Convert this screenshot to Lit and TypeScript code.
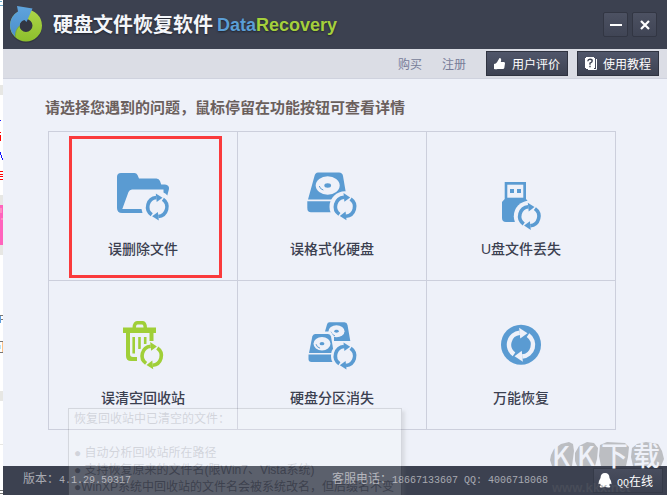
import { LitElement, html, svg, css } from "lit";
import { customElement } from "lit/decorators.js";
import { classMap } from "lit/directives/class-map.js";

const PAPER = "#eef1f9";

const syncHalf = () => svg`
  <path d="M-1 -9.5A9.5 9.5 0 0 0 -5.6 7.7" fill="none" stroke="currentColor" stroke-width="3.600"/>
  <path d="M-1.5 -13.6L5.2 -9.2L-0.6 -4.9Z" fill="currentColor"/>`;

// Pair of circling arrows, centred on the given point.
const sync = (x: number, y: number, scale = 1) => svg`
  <g transform="translate(${x} ${y}) scale(${scale})">
    ${syncHalf()}
    <g transform="rotate(180)">${syncHalf()}</g>
  </g>`;

const platter = (x: number, y: number, rx: number, ry: number) => svg`
  <ellipse cx=${x} cy=${y} rx=${rx} ry=${ry} fill=${PAPER}/>
  <ellipse cx=${x} cy=${y} rx=${rx * 0.28} ry=${ry * 0.24} fill="currentColor"/>
  <path d="M${x - rx * 0.7} ${y + 0.5}q.6 3 4 4" fill="none" stroke="currentColor" stroke-width="1"/>`;

const icons = {
  folder: svg`
    <path fill="currentColor" d="M6 5H19.500Q21.500 5 22.500 7L24 10.500H41.500Q44 10.500 45 13L46.200 16.500H50Q54.500 17 54 21L52.300 27.500Q51 25.500 48.500 24.500V21.500H17Q14.500 21.500 13.500 24L7.300 41H26.500L27.500 45H7Q2 45 2 40V9Q2 5 6 5Z"/>
    ${sync(42.3, 39)}`,
  disk: svg`
    <path fill="currentColor" d="M14 4.500H35Q38.500 4.500 39 8L43 31.500H4L10.500 8Q11.300 4.500 14 4.500Z"/>
    <path fill="currentColor" d="M3.300 33.300H43V44.300H7Q3.300 44.300 3.300 40Z"/>
    ${platter(23.7, 17.5, 12, 9.2)}
    <circle cx="41" cy="38.700" r="15.500" fill=${PAPER}/>
    ${sync(41, 38.7)}`,
  usb: svg`
    <path fill="currentColor" d="M11.700 14H33V31L35.500 34V54H13Q9 54 9 50V34L11.700 31Z"/>
    <path fill=${PAPER} d="M14.300 16.700H30.300V29.700H14.300Z"/>
    <path fill="currentColor" d="M17 21h4v4h-4zM24 21h4v4h-4z"/>
    <circle cx="36.300" cy="48.300" r="15.500" fill=${PAPER}/>
    ${sync(36.3, 48.3)}`,
  trash: svg`
    <path fill="currentColor" d="M8 10.500H17.500Q18 4 22 4H28Q31.500 4 32 10.500H41V16H38.500V24H34.500V16H15V37Q15 40 18 40H22V44H16Q11 44 11 39V16H8ZM21 10.500H28.500Q28.500 7.500 27 7.500H22.500Q21 7.500 21 10.500Z"/>
    <path fill="none" stroke="currentColor" stroke-width="2.600" d="M18.700 20V36.500M24.500 20V32M30.200 20V27"/>
    <circle cx="36.700" cy="38.700" r="13" fill=${PAPER}/>
    ${sync(36.7, 38.7)}`,
  partitions: svg`
    <path fill="currentColor" d="M25.500 5.300H40.500Q43 5.300 43.500 8L46.300 24H30L27.500 14.500H21L23 7.500Q23.500 5.300 25.500 5.300Z"/>
    ${platter(32.5, 14.3, 8, 6)}
    <path fill=${PAPER} d="M8 15H27L30 20V28H8Z"/>
    <path fill="currentColor" d="M11 17H24Q26.500 17 27 19.500L29.800 36H5L8.300 19.500Q9 17 11 17Z"/>
    <path fill="currentColor" d="M4.500 37.500H30V45H7.500Q4.500 45 4.500 42Z"/>
    ${platter(18, 26.7, 8.5, 6.7)}
    <circle cx="41" cy="39" r="14" fill=${PAPER}/>
    ${sync(41, 39)}`,
  round: svg`
    <circle cx="28" cy="27.700" r="20" fill="currentColor"/>
    <g color=${PAPER}>${sync(28, 27.7, 1.25)}</g>`,
};

type IconName = keyof typeof icons;

interface Tile {
  icon: IconName;
  label: string;
  green?: boolean;
  marked?: boolean;
  tip?: string[];
}

const tiles: Tile[] = [
  { icon: "folder", label: "误删除文件", marked: true },
  { icon: "disk", label: "误格式化硬盘" },
  { icon: "usb", label: "U盘文件丢失" },
  {
    icon: "trash",
    label: "误清空回收站",
    green: true,
    tip: [
      "恢复回收站中已清空的文件：",
      "",
      "● 自动分析回收站所在路径",
      "● 支持恢复原来的文件名(限Win7、Vista系统)",
      "●WinXP系统中回收站的文件名会被系统改名，但后缀名不变",
    ],
  },
  { icon: "partitions", label: "硬盘分区消失" },
  { icon: "round", label: "万能恢复" },
];

@customElement("app-root")
export class AppRoot extends LitElement {
  static styles = css`
    :host {
      display: block;
      font-family: "Liberation Sans", "Noto Sans CJK SC", sans-serif;
      font-size: 12px;
      color: #3b4050;
    }
    * { box-sizing: border-box; }
    button {
      font: inherit;
      color: inherit;
      margin: 0;
      padding: 0;
      border: 0;
      background: none;
      cursor: pointer;
    }
    a { text-decoration: none; color: inherit; }
    svg { display: block; flex: none; }

    .desk { display: flex; min-height: 100vh; overflow: hidden; position: relative; background: #fff; }
    .edge { flex: none; width: 3px; }
    .window { flex: 1; min-width: 0; display: flex; flex-direction: column; background: #eef1f9; }

    .title { height: 49px; display: flex; align-items: center; padding: 0 10px 0 6px; background: #3c4150; }
    .name {
      margin: 0 0 0 6px;
      display: flex;
      align-items: center;
      gap: 4px;
      font-size: 20px;
      line-height: 28px;
      font-weight: 700;
      color: #f4f6fa;
      text-shadow: 0 1px 2px #20232c;
      white-space: nowrap;
    }
    .latin { display: flex; font-size: 18px; }
    .data { color: #5b9ed6; }
    .recovery { color: #a5d03c; }
    .controls { margin-left: auto; display: flex; gap: 4px; }
    .control {
      width: 25px;
      height: 25px;
      display: grid;
      place-items: center;
      border: 1px solid #323643;
      border-radius: 2px;
      background: linear-gradient(#4c5162, #404555);
    }

    .bar {
      height: 30px;
      display: flex;
      align-items: center;
      justify-content: flex-end;
      padding: 0 8px;
      background: #dbdde5;
      border-bottom: 1px solid #cfd2de;
    }
    .link { color: #777c98; margin-right: 20px; }
    .pill {
      height: 25px;
      display: flex;
      align-items: center;
      gap: 6px;
      padding: 0 7px;
      border: 1px solid #2f3340;
      background: linear-gradient(#50566a, #3d4252);
      color: #fff;
      white-space: nowrap;
    }
    .pill + .pill { margin-left: 9px; }

    .main { flex: 1; padding: 17px 51px 36px 45px; }
    .ask { margin: 0 0 0 -3px; font-size: 15px; line-height: 24px; font-weight: 700; color: #6b605d; }
    .grid {
      list-style: none;
      margin: 11px 0 0;
      padding: 0;
      display: grid;
      grid-template-columns: repeat(3, 1fr);
      border: 1px solid #cccfdc;
      border-width: 1px 0 0 1px;
    }
    .cell { position: relative; border: 1px solid #cccfdc; border-width: 0 1px 1px 0; }
    .tile {
      width: 100%;
      height: 148px;
      display: flex;
      flex-direction: column;
      align-items: center;
      gap: 15px;
      padding-top: 36px;
      font-size: 14px;
      line-height: 20px;
      font-weight: 500;
    }
    .icon { width: 56px; height: 56px; overflow: visible; color: #5a9bd2; }
    .green .icon { color: #a0cf38; }
    .marked::after {
      content: "";
      position: absolute;
      inset: 4px 15px 2px 20px;
      border: 3px solid #fa3a3c;
      pointer-events: none;
    }
    .tip {
      position: absolute;
      z-index: 2;
      top: 127px;
      left: 19px;
      width: 334px;
      height: 140px;
      padding: 2px 5px;
      border: 1px solid #555;
      background: #fff;
      box-shadow: 3px 3px 3px #777;
      color: #444;
      line-height: 17px;
      opacity: 0.16;
      white-space: nowrap;
      pointer-events: none;
    }
    .line { margin: 0; min-height: 17px; }

    .foot {
      height: 29px;
      display: flex;
      align-items: center;
      padding: 0 4px 0 20px;
      background: #3c4150;
      color: #a8aab2;
      white-space: nowrap;
    }
    .foot p { margin: 0; line-height: 16px; padding-bottom: 2px; }
    .num { font-family: "Liberation Mono", monospace; font-size: 10px; }
    .foot .phone { margin: 0 45px 0 auto; }
    .qq {
      width: 70px;
      height: 25px;
      display: flex;
      align-items: center;
      gap: 5px;
      padding: 0 4px;
      border: 1px solid #353a48;
      background: linear-gradient(#484d5e, #3c4150);
      color: #fff;
    }

    .mark { position: absolute; right: 2px; bottom: 0; width: 116px; height: 54px; pointer-events: none; }
    .marktext { font: 500 27px "Noto Sans CJK SC", sans-serif; }
    .site { font: 700 13px "Liberation Sans", sans-serif; }
  `;

  private tile(t: Tile) {
    return html`
      <li class=${classMap({ cell: true, green: !!t.green, marked: !!t.marked })}>
        <button class="tile">
          <svg class="icon" viewBox="0 0 56 56" aria-hidden="true">${icons[t.icon]}</svg>
          <span>${t.label}</span>
        </button>
        ${t.tip ? html`<div class="tip" role="tooltip">${t.tip.map((l) => html`<p class="line">${l}</p>`)}</div>` : null}
      </li>`;
  }

  render() {
    return html`
      <div class="desk">
        <svg class="edge" width="3" height="495" viewBox="0 0 3 495" aria-hidden="true">
          <path fill="#6aa9cc" d="M0 1h2v1H0zM0 5h3v1H0z"/>
          <path fill="#e7e7e4" d="M0 85h3v10H0zM0 195h3v60H0zM0 391h3v10H0zM0 444h3v1H0z"/>
          <path fill="#1414ff" d="M0 120h1v1H0zM0 152h1v3h1v3h1v2H2v-2H1v-3H0z"/>
          <path fill="#f00" d="M0 132h1v1H0zM0 135h1v6H0zM0 171h3v1H0zM0 174h3v1H0zM0 176h3v1H0zM0 179h3v1H0z"/>
          <path fill="#ff63bd" d="M0 205h3v40H0z"/>
          <path fill="#ff8cc4" d="M0 208h2v5H0zM1 218h2v2H1z"/>
          <path fill="#777" d="M0 315h3v1H0zM0 319h3v1H0zM0 341h3v1H0zM0 352h3v1H0zM0 490h3v1H0zM0 493h3v1H0z"/>
          <path fill="#5f9fe0" d="M0 316h1v7H0z"/>
          <path fill="#ffc48a" d="M2 342h1v10H2z"/>
          <path fill="#b9e4f5" d="M0 345h1v4H0z"/>
        </svg>
        <div class="window">
          <header class="title">
            <svg width="38" height="40" viewBox="0 0 38 40" aria-hidden="true">
              <defs>
                <linearGradient id="g" x1="0" y1="0" x2="0" y2="1"><stop offset="0" stop-color="#aed548"/><stop offset="1" stop-color="#8cbf2c"/></linearGradient>
                <linearGradient id="b" x1="0" y1="0" x2="0" y2="1"><stop offset="0" stop-color="#5fa4de"/><stop offset="1" stop-color="#4c8fca"/></linearGradient>
              </defs>
              <ellipse cx="17" cy="22" rx="16" ry="16" fill="#2b2f3a" opacity=".6"/>
              <path fill="url(#g)" fill-rule="evenodd" d="M17 4.500A16 16 0 1 1 17 36.500A16 16 0 1 1 17 4.500ZM17 14A6.500 6.500 0 1 0 17 27A6.500 6.500 0 1 0 17 14Z"/>
              <path fill="url(#b)" d="M8 1L23.500 3.500L17.500 17L15.500 15Q11 16 10.500 21Q6 25 6.500 32Q1 27 1 20Q1.500 11 9 6.500Z"/>
              <path d="M10.500 21Q6 25 6.500 32" fill="none" stroke="#7aa92c" stroke-width=".8"/>
            </svg>
            <h1 class="name">
              <span>硬盘文件恢复软件</span>
              <span class="latin"><span class="data">Data</span><span class="recovery">Recovery</span></span>
            </h1>
            <div class="controls">
              <button class="control" aria-label="最小化">
                <svg width="12" height="12" viewBox="0 0 12 12"><path d="M0 5h12v2H0z" fill="#fff"/></svg>
              </button>
              <button class="control" aria-label="关闭">
                <svg width="10" height="10" viewBox="0 0 10 10"><path d="M1 1l8 8M9 1L1 9" stroke="#fff" stroke-width="2.200"/></svg>
              </button>
            </div>
          </header>

          <nav class="bar">
            <a class="link" href="#buy">购买</a>
            <a class="link" href="#register">注册</a>
            <button class="pill">
              <svg width="12" height="12" viewBox="0 0 12 12" aria-hidden="true"><path fill="#fff" d="M5.500 0Q7.500 0 7.200 2L6.800 4H10Q11 4.200 11 5.200L10.300 10Q10 11 9 11H3.500Q2.500 11.500 0 11V6Q2 5.800 3 4.200Z"/></svg>
              <span>用户评价</span>
            </button>
            <button class="pill">
              <svg width="12" height="13" viewBox="0 0 12 13" aria-hidden="true">
                <path fill="#fff" d="M1 0H9V1H10V11H9V12H1V11H0V1H1Z"/>
                <path fill="none" stroke="#fff" d="M11.500 2V12.500H3"/>
                <path fill="none" stroke="#3d4252" stroke-width="1.400" d="M2.800 4.200Q3 2.300 5 2.300Q7.200 2.300 7.200 4Q7.200 5 5 6.200V7.800M5 8.800V10.300"/>
              </svg>
              <span>使用教程</span>
            </button>
          </nav>

          <main class="main">
            <h2 class="ask">请选择您遇到的问题，鼠标停留在功能按钮可查看详情</h2>
            <ul class="grid">${tiles.map((t) => this.tile(t))}</ul>
          </main>

          <footer class="foot">
            <p>版本：<span class="num">4.1.29.50317</span></p>
            <p class="phone">客服电话：<span class="num">18667133607 QQ: 4006718068</span></p>
            <button class="qq">
              <svg width="14" height="15" viewBox="0 0 14 15" aria-hidden="true"><path fill="#fff" d="M7 0Q11.300 0 11.500 5Q13.800 8.500 13.500 11Q13 11.500 12 10.500L11.200 12.300Q13 13.500 12 14.300Q9.500 15 7 13.800Q4.500 15 2 14.300Q1 13.500 2.800 12.300L2 10.500Q1 11.500.5 11Q.2 8.500 2.500 5Q2.700 0 7 0Z"/></svg>
              <span><span class="num">QQ</span>在线</span>
            </button>
          </footer>
        </div>

        <svg class="mark" viewBox="0 0 116 54" aria-hidden="true">
          <path fill="#777" opacity=".42" d="M2 14L5 8L12 3L20 1L24 3L25 10L23 25H3L1 19ZM26 12L30 5L38 1L45 2L49 7L48 18L46 25H28L26 20ZM51 4L58 1L76 2L80 6L79 16L77 25H52L50 15ZM83 7L88 3L97 1L109 3L113 10L115 18L112 25H84L82 16Z"/>
          <text class="marktext" x="3 28 52 84" y="25" fill="#eef1f9">KK下载</text>
          <text class="site" x="3" y="51" fill="#5a5e66" opacity=".4">www.kkx.net</text>
        </svg>
      </div>`;
  }
}
